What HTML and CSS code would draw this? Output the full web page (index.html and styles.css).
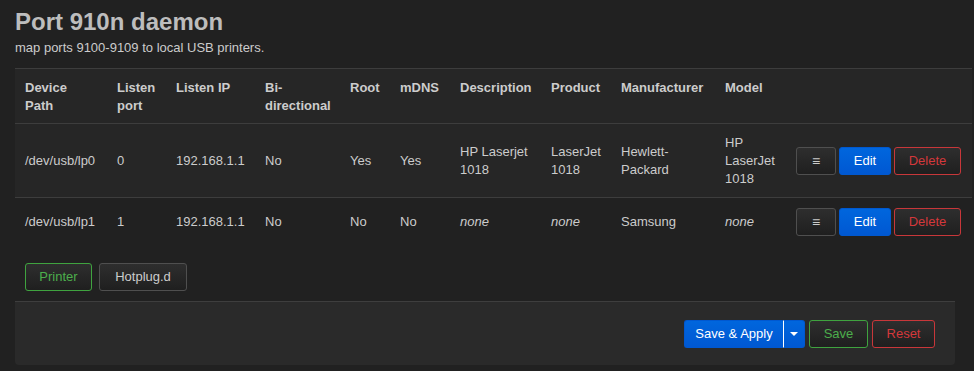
FILE: index.html
```html
<!DOCTYPE html>
<html>
<head>
<meta charset="utf-8">
<link rel="stylesheet" href="styles.css">
</head>
<body>
<div class="page">
  <h2 class="title">Port 910n daemon</h2>
  <div class="desc">map ports 9100-9109 to local USB printers.</div>
  <table class="tbl">
    <thead>
      <tr class="head">
        <th class="c-path">Device Path</th>
        <th class="c-port">Listen port</th>
        <th class="c-ip">Listen IP</th>
        <th class="c-bi">Bi-directional</th>
        <th class="c-root">Root</th>
        <th class="c-mdns">mDNS</th>
        <th class="c-desc">Description</th>
        <th class="c-prod">Product</th>
        <th class="c-man">Manufacturer</th>
        <th class="c-model">Model</th>
        <th class="c-act"></th>
      </tr>
    </thead>
    <tbody>
      <tr class="odd">
        <td>/dev/usb/lp0</td>
        <td>0</td>
        <td>192.168.1.1</td>
        <td>No</td>
        <td>Yes</td>
        <td>Yes</td>
        <td>HP Laserjet 1018</td>
        <td>LaserJet 1018</td>
        <td>Hewlett-Packard</td>
        <td>HP LaserJet 1018</td>
        <td class="acts"><div class="btns"><button class="btn dark more">&#8801;</button><button class="btn blue edit">Edit</button><button class="btn red del">Delete</button></div></td>
      </tr>
      <tr class="even">
        <td>/dev/usb/lp1</td>
        <td>1</td>
        <td>192.168.1.1</td>
        <td>No</td>
        <td>No</td>
        <td>No</td>
        <td><em>none</em></td>
        <td><em>none</em></td>
        <td>Samsung</td>
        <td><em>none</em></td>
        <td class="acts"><div class="btns"><button class="btn dark more">&#8801;</button><button class="btn blue edit">Edit</button><button class="btn red del">Delete</button></div></td>
      </tr>
    </tbody>
  </table>
  <div class="tabs">
    <button class="btn green tab-printer">Printer</button>
    <button class="btn dark tab-hot">Hotplug.d</button>
  </div>
  <div class="footer">
    <div class="split">
      <button class="btn blue sa">Save &amp; Apply</button><button class="btn blue caret"><span class="tri"></span></button>
    </div>
    <button class="btn green save">Save</button>
    <button class="btn red reset">Reset</button>
  </div>
</div>
</body>
</html>
```
FILE: styles.css
```css
html, body {
  margin: 0;
  padding: 0;
  background: #212121;
  color: #cccccc;
  font-family: "Liberation Sans", Arial, sans-serif;
  font-size: 13px;
  line-height: 18px;
}
.page {
  padding: 0 0 0 15px;
}
.title {
  margin: 0;
  padding-top: 8px;
  font-size: 24px;
  line-height: 28px;
  font-weight: bold;
  color: #bdbdbd;
}
.desc {
  margin-top: 3px;
  height: 29px;
  line-height: 18px;
  color: #cccccc;
}
.tbl {
  width: 957px;
  border-collapse: collapse;
  table-layout: fixed;
}
.tbl th, .tbl td {
  text-align: left;
  border-top: 1px solid #3d3d3d;
}
.tbl th {
  padding: 10px 0 8px 10px;
  vertical-align: top;
  font-weight: bold;
  color: #cccccc;
  height: 36px;
}
.tbl td {
  vertical-align: middle;
  padding: 10px 0 9px 10px;
}
.tbl em { font-style: italic; }
.head, .odd { background: #262626; }
.even { background: #212121; }
.even td { padding-top: 10px; padding-bottom: 10px; height: 28px; }
.tbl th.c-path { width: 72px; padding-right: 10px; }
.c-port { width: 49px; }
.c-ip { width: 79px; }
.c-bi { width: 75px; }
.c-root { width: 40px; }
.c-mdns { width: 50px; }
.c-desc { width: 81px; }
.c-prod { width: 60px; }
.c-man { width: 94px; }
.c-model { width: 61px; }
.c-act { width: auto; }
.btns {
  display: flex;
  gap: 3px;
}
.btn {
  font-family: "Liberation Sans", Arial, sans-serif;
  font-size: 13px;
  height: 28px;
  line-height: 26px;
  padding: 0;
  margin: 0;
  border-radius: 3px;
  border: 1px solid #4f4f4f;
  color: #cccccc;
  background: linear-gradient(#2e2e2e, #1f1f1f);
  text-align: center;
  cursor: pointer;
}
.dark { border-color: #4f4f4f; color: #cccccc; }
.blue {
  background: linear-gradient(#0066dd, #0058d2);
  border-color: #0058d0;
  color: #ffffff;
}
.red { border-color: #c8373a; color: #d4383b; }
.green { border-color: #3fa33f; color: #4cae4c; }
.more { width: 40px; font-size: 14px; }
.edit { width: 52px; }
.del { width: 67px; }
.tabs {
  display: flex;
  gap: 7px;
  padding: 17px 0 10px 10px;
}
.tab-printer { width: 67px; }
.tab-hot { width: 88px; }
.footer {
  width: 920px;
  height: 45px;
  background: #2a2a2a;
  border-top: 1px solid #3e3e3e;
  border-radius: 0 0 4px 4px;
  display: flex;
  justify-content: flex-end;
  align-items: flex-start;
  gap: 4px;
  padding: 18px 20px 0 0;
  box-sizing: content-box;
}
.split { display: flex; }
.sa {
  width: 100px;
  border-radius: 3px 0 0 3px;
  border-right: 1px solid #ffffff;
}
.caret {
  width: 21px;
  border-left: 0;
  border-radius: 0 3px 3px 0;
  display: flex;
  align-items: center;
  justify-content: center;
}
.tri {
  width: 0;
  height: 0;
  border-left: 4px solid transparent;
  border-right: 4px solid transparent;
  border-top: 4px solid #ffffff;
}
.save { width: 59px; }
.reset { width: 63px; }
```
